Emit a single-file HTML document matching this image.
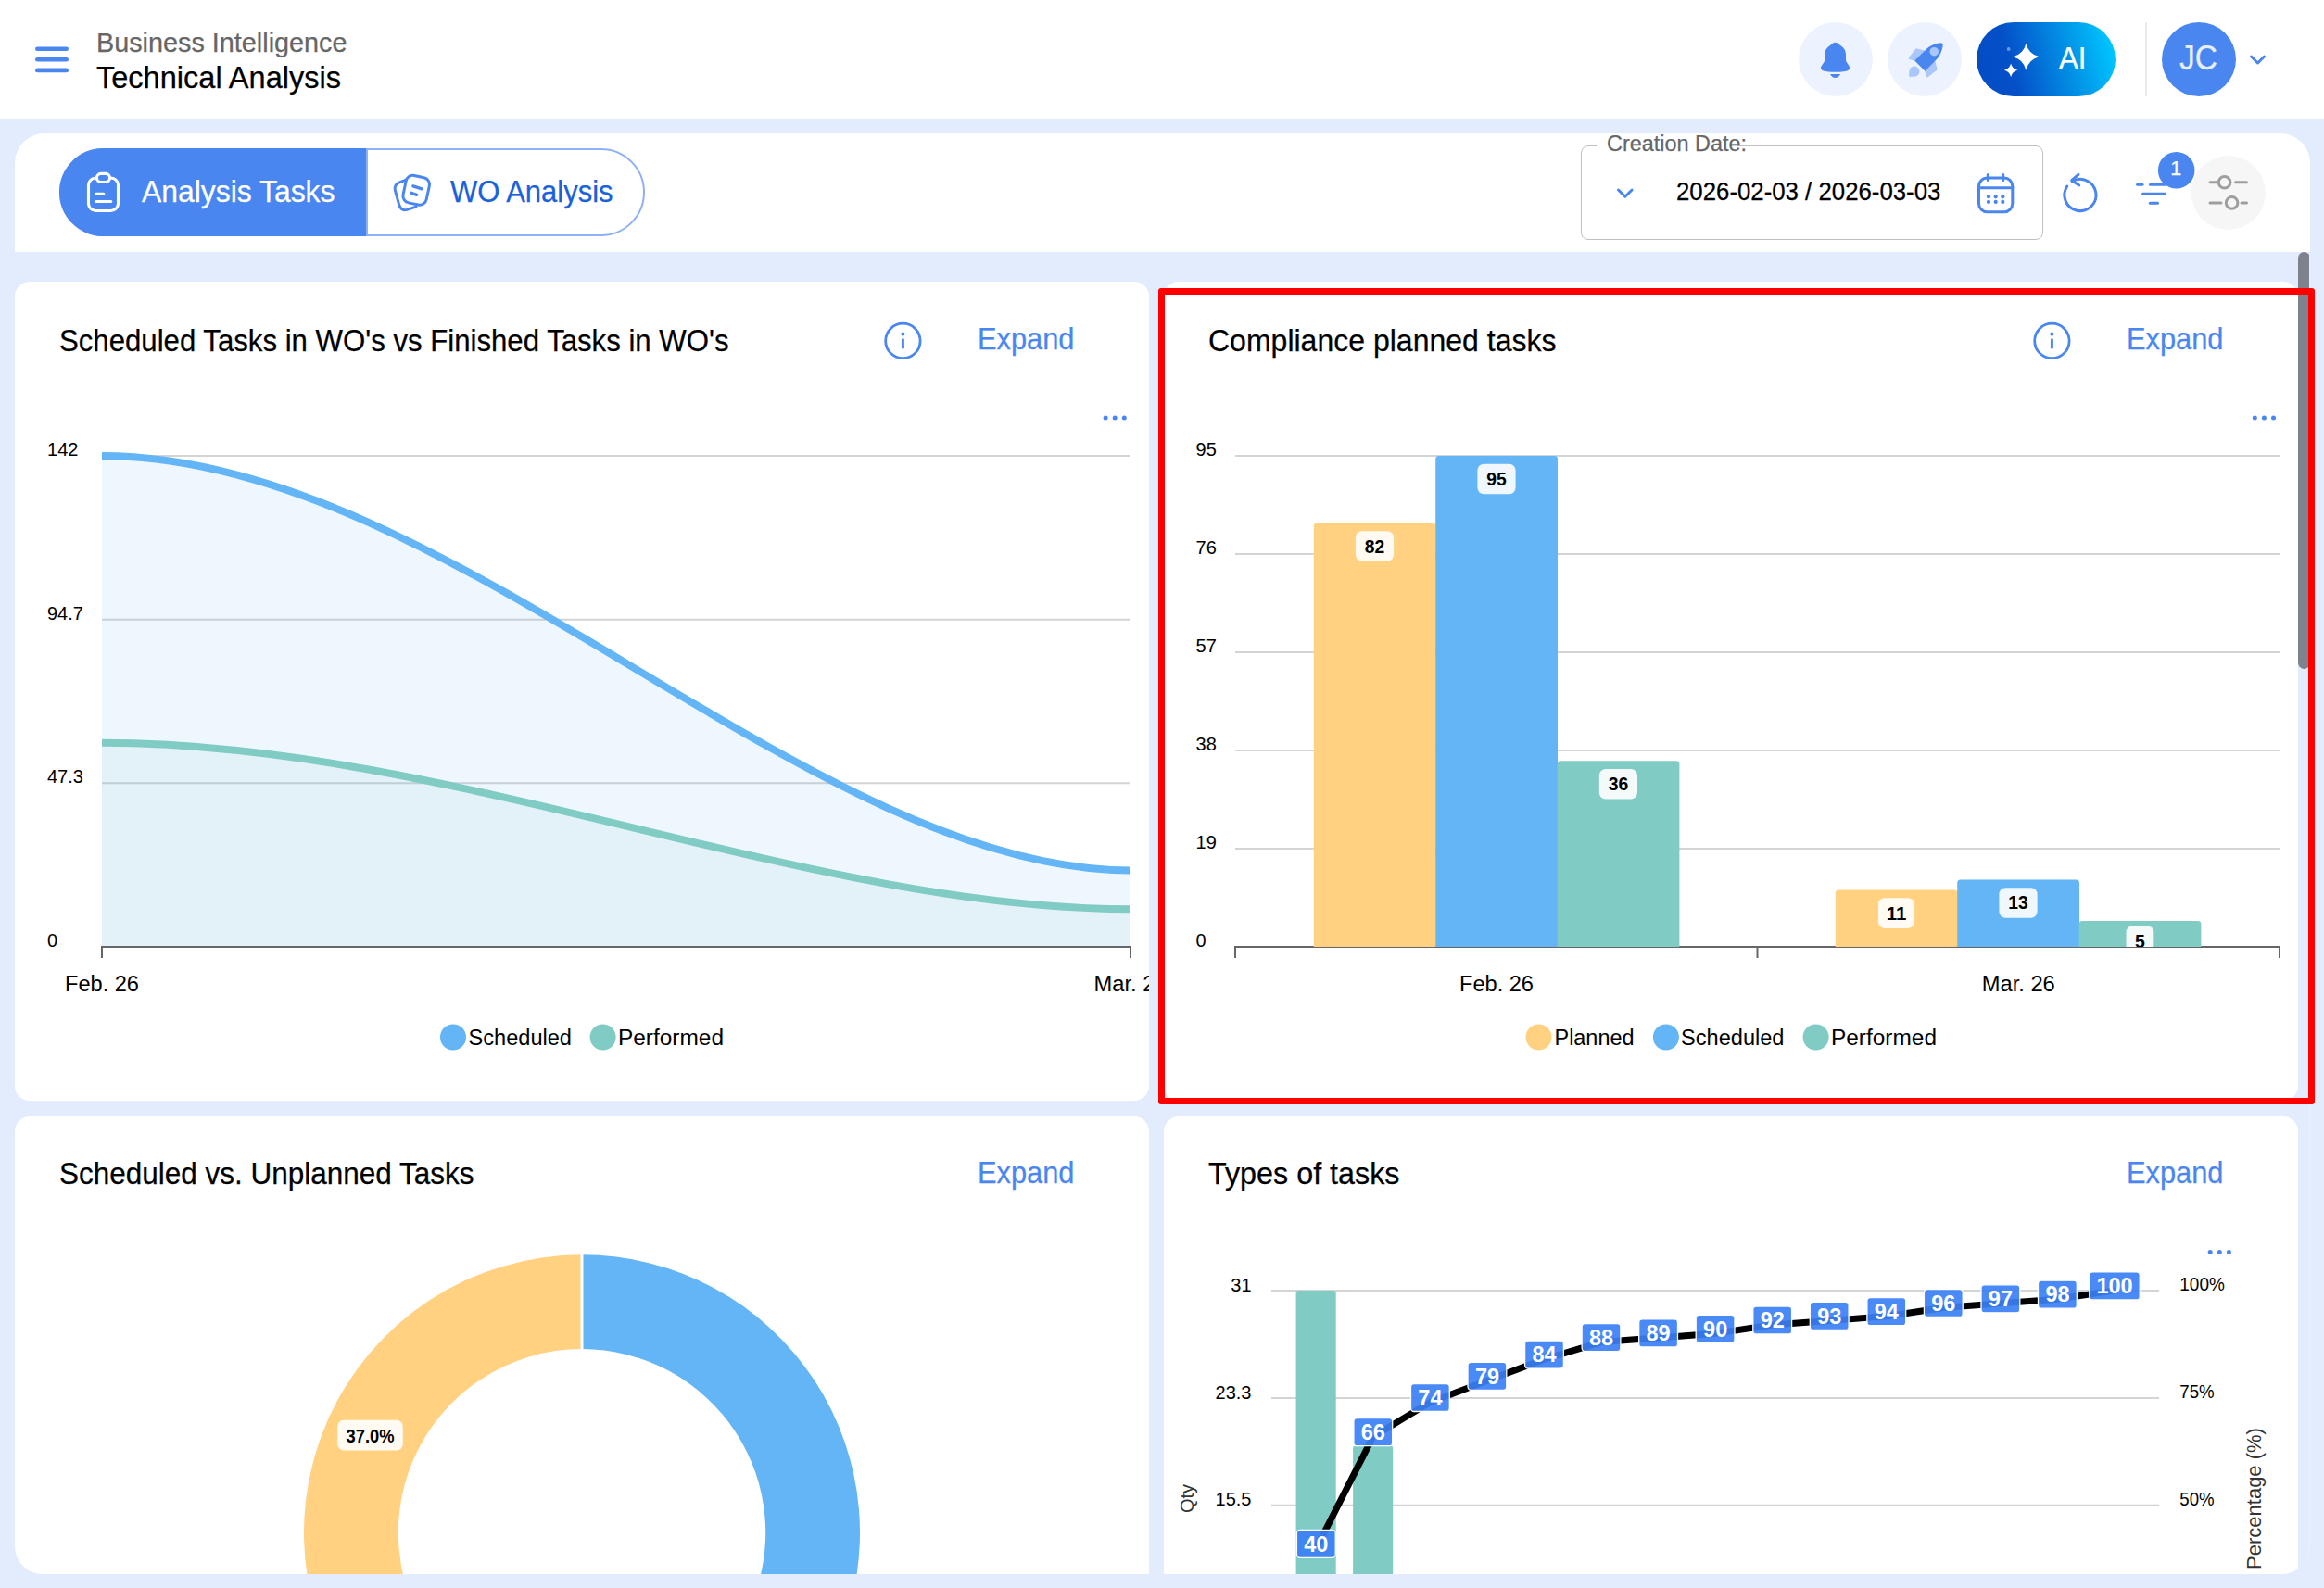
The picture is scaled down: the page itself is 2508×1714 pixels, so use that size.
<!DOCTYPE html>
<html lang="en"><head><meta charset="utf-8"><title>Technical Analysis</title>
<style>
html,body{margin:0;padding:0;}
body{width:2508px;height:1714px;overflow:hidden;background:#e3ecfd;font-family:"Liberation Sans",Arial,sans-serif;position:relative;}
.t{position:absolute;line-height:1;white-space:pre;transform-origin:0 0;-webkit-text-stroke:0.250px currentColor;}
.abs{position:absolute;}
svg{position:absolute;left:0;top:0;overflow:visible;}
svg text{font-family:"Liberation Sans",Arial,sans-serif;}
.card{position:absolute;background:#fff;border-radius:16px;}
</style></head><body>

<div class="abs" style="left:0;top:0;width:2508px;height:127.5px;background:#fff;"></div>
<svg width="2508" height="128" viewBox="0 0 2508 128"><g stroke="#4a86f0" stroke-width="4.6" stroke-linecap="round"><line x1="40.3" y1="52.8" x2="71.7" y2="52.8"/><line x1="40.3" y1="64.3" x2="71.7" y2="64.3"/><line x1="40.3" y1="75.9" x2="71.7" y2="75.9"/></g></svg>
<span class="t" style="left:104.00px;top:32.25px;font-size:29px;color:#666;transform:scaleX(0.9929);">Business Intelligence</span>
<span class="t" style="left:104.00px;top:66.67px;font-size:33px;color:#000;transform:scaleX(0.9858);">Technical Analysis</span>
<div class="abs" style="left:1940.7px;top:24px;width:80px;height:80px;border-radius:50%;background:#ecf2fe;"></div>
<div class="abs" style="left:2036.8px;top:24px;width:80px;height:80px;border-radius:50%;background:#ecf2fe;"></div>
<div class="abs" style="left:2133px;top:24px;width:150px;height:80px;border-radius:40px;background:linear-gradient(75deg,#034bc4 0%,#0450c8 27%,#00c8ff 96%);"></div>
<div class="abs" style="left:2315px;top:24px;width:2px;height:80px;background:#e9e9e9;"></div>
<div class="abs" style="left:2333px;top:24px;width:80px;height:80px;border-radius:50%;background:#4a86f0;"></div>
<span class="t" style="left:2352.30px;top:44.08px;font-size:37px;color:#e8f0fe;transform:scaleX(0.9067);">JC</span>
<span class="t" style="left:2221.50px;top:46.07px;font-size:33px;color:#fff;transform:scaleX(0.9461);">AI</span>
<svg width="2508" height="128" viewBox="0 0 2508 128">
<!-- bell -->
<path d="M1980.6 45.8C1982.6 45.8 1983.8 46.9 1985.2 48.2C1988.8 50.6 1992 53.2 1992 59.500V64.500C1992 67.500 1996.200 70.500 1996.200 73.600C1996.200 76.400 1992.500 77.800 1980.6 77.800C1968.700 77.800 1965 76.400 1965 73.600C1965 70.500 1969.200 67.500 1969.200 64.500V59.500C1969.200 53.200 1972.400 50.600 1976 48.200C1977.400 46.900 1978.600 45.800 1980.6 45.800Z" fill="#4a86f0"/>
<path d="M1975.100 80.100H1986.100C1984.800 82.800 1983 84 1980.600 84C1978.200 84 1976.400 82.800 1975.100 80.100Z" fill="#4a86f0"/>
<!-- rocket -->
<g transform="translate(2071.860 71.100) rotate(45)">
<g fill="#a9c7f8" stroke="#a9c7f8" stroke-width="2.400" stroke-linejoin="round">
<path d="M-7.500 -14.200L-15 -9.800L-13.600 1.800L-7.500 -1.200Z"/>
<path d="M7.500 -14.200L15 -9.800L13.600 1.800L7.500 -1.200Z"/>
</g>
<path d="M0 2.900C3.300 2.900 5.500 5.400 5.500 8.400C5.500 11.400 2.600 13.600 0.600 16C0.200 16.500 -0.200 16.500 -0.600 16C-2.600 13.600 -5.500 11.400 -5.500 8.400C-5.500 5.400 -3.300 2.900 0 2.900Z" fill="#a9c7f8"/>
<path d="M-7.900 0V-16C-7.900 -24 -4.500 -30 -1.600 -33.500Q0 -35.200 1.600 -33.500C4.500 -30 7.900 -24 7.900 -16V0Z" fill="#4a86f0"/>
<circle cx="0" cy="-21.800" r="4.800" fill="#a9c7f8"/>
</g>
<!-- sparkle -->
<path d="M2186.450 46.900Q2189.250 58.500 2200.850 61.300Q2189.250 64.100 2186.450 75.700Q2183.650 64.100 2172.050 61.300Q2183.650 58.500 2186.450 46.900Z" fill="#fff"/>
<path d="M2170.100 68.500Q2171.500 74.400 2177.400 75.800Q2171.500 77.200 2170.100 83.100Q2168.700 77.200 2162.800 75.800Q2168.700 74.400 2170.100 68.500Z" fill="#fff"/>
<circle cx="2167.700" cy="52.900" r="1.900" fill="#7fb0ee" fill-opacity="0.8"/>
<!-- chevron -->
<path d="M2429.500 61l7 7 7-7" fill="none" stroke="#4a86f0" stroke-width="3" stroke-linecap="round" stroke-linejoin="round"/>
</svg>
<div class="abs" style="left:16px;top:144px;width:2476.500px;height:127.500px;background:#fff;border-radius:32px 32px 0 0;"></div>
<div class="abs" style="left:64px;top:160.200px;width:631.500px;height:95.300px;border-radius:48px;background:#fff;box-sizing:border-box;border:2px solid #8db1f5;"></div>
<div class="abs" style="left:64px;top:160.200px;width:331.500px;height:95.300px;border-radius:48px 0 0 48px;background:#4a86f0;"></div>
<div class="abs" style="left:394.800px;top:160.200px;width:2px;height:95.300px;background:#8db1f5;"></div>
<span class="t" style="left:152.50px;top:190.27px;font-size:33px;color:#fff;transform:scaleX(0.9661);">Analysis Tasks</span>
<span class="t" style="left:486.30px;top:190.27px;font-size:33px;color:#1a62d9;transform:scaleX(0.9383);">WO Analysis</span>
<svg width="2508" height="300" viewBox="0 0 2508 300" fill="none" stroke-linecap="round" stroke-linejoin="round">
<!-- clipboard -->
<g stroke="#fff" stroke-width="3.100">
<rect x="95.500" y="192" width="32" height="35.500" rx="7.800"/>
<rect x="104.400" y="187.400" width="14.200" height="9.100" rx="4.550" fill="#4a86f0"/>
<line x1="103.600" y1="209.400" x2="111.800" y2="209.400"/><line x1="103.600" y1="217.500" x2="119.700" y2="217.500"/>
</g>
<!-- WO icon -->
<g stroke="#4a86f0" stroke-width="3">
<path d="M438.400 194.100L432.200 196.300C427.600 198 425.300 200.800 426.300 205.200L430.500 220.300C431.800 225.200 434.600 227.600 439.200 226.400L449 223.100"/>
<rect x="-12.850" y="-15" width="25.700" height="30" rx="7.500" transform="translate(449.200 205.300) rotate(12)" fill="#fff"/>
<g stroke-width="3.300"><line x1="445.800" y1="200.900" x2="455.200" y2="203.800"/><line x1="443.900" y1="208.300" x2="449.600" y2="210.400"/></g>
</g>
</svg>
<div class="abs" style="left:1706px;top:157px;width:498.500px;height:101.500px;box-sizing:border-box;border:1.600px solid #c0c0c0;border-radius:8px;"></div>
<div class="abs" style="left:1723px;top:154px;width:152px;height:8px;background:#fff;"></div>
<span class="t" style="left:1734.00px;top:143.31px;font-size:24.8px;color:#666;transform:scaleX(0.9443);">Creation Date:</span>
<span class="t" style="left:1809.00px;top:193.53px;font-size:26.9px;color:#000;transform:scaleX(0.9593);">2026-02-03 / 2026-03-03</span>
<svg width="2508" height="300" viewBox="0 0 2508 300" fill="none" stroke-linecap="round" stroke-linejoin="round">
<path d="M1746.500 205l7.300 7.300 7.300-7.300" stroke="#4a86f0" stroke-width="3"/>
<!-- calendar -->
<g stroke="#4a86f0" stroke-width="3">
<rect x="2135.500" y="192" width="36.300" height="36.800" rx="9"/>
<line x1="2135.500" y1="202.700" x2="2171.800" y2="202.700"/>
<line x1="2145.300" y1="188.500" x2="2145.300" y2="194.500"/><line x1="2161.700" y1="188.500" x2="2161.700" y2="194.500"/>
</g>
<g fill="#4a86f0"><circle cx="2146" cy="212.300" r="2.100"/><circle cx="2153.700" cy="212.300" r="2.100"/><circle cx="2161.300" cy="212.300" r="2.100"/>
<circle cx="2146" cy="217.900" r="2.100"/><circle cx="2153.700" cy="217.900" r="2.100"/><circle cx="2161.300" cy="217.900" r="2.100"/></g>
<!-- refresh -->
<g stroke="#4a86f0" stroke-width="3">
<path d="M2236.240 195.860A17.050 17.050 0 1 1 2230.820 200.990"/>
<path d="M2243 188.300L2235.700 194.700L2243.700 199.900"/>
</g>
<!-- filter -->
<g stroke="#4a86f0" stroke-width="3">
<line x1="2306.500" y1="199.300" x2="2312" y2="199.300"/><line x1="2320.500" y1="199.300" x2="2337" y2="199.300"/>
<line x1="2312.500" y1="209.300" x2="2336.500" y2="209.300"/><line x1="2320.300" y1="219.200" x2="2328.500" y2="219.200"/>
</g>
<circle cx="2348.700" cy="183.800" r="19.800" fill="#4a86f0"/>
<circle cx="2404.800" cy="208.100" r="40" fill="#f6f6f6"/>
<g stroke="#9e9e9e" stroke-width="3">
<line x1="2385" y1="196.800" x2="2393" y2="196.800"/><circle cx="2400.600" cy="196.800" r="6.300"/><line x1="2412.500" y1="196.800" x2="2424.500" y2="196.800"/>
<line x1="2385" y1="218.900" x2="2397" y2="218.900"/><circle cx="2408.600" cy="218.900" r="6.300"/><line x1="2419" y1="218.900" x2="2424.500" y2="218.900"/>
</g>
</svg>
<span class="t" style="left:2342.32px;top:171.60px;font-size:21.5px;color:#fff;">1</span>
<div class="abs" style="left:16px;top:272px;width:2477px;height:1427px;overflow:hidden;border-radius:0 0 30px 30px;box-sizing:border-box;border-right:1px solid rgba(255,255,255,0.220);">
<div class="card" style="left:0px;top:32px;width:1224px;height:884px;"></div>
<div class="card" style="left:1240px;top:32px;width:1224px;height:884px;"></div>
<div class="card" style="left:0px;top:932.7px;width:1224px;height:884px;"></div>
<div class="card" style="left:1240px;top:932.7px;width:1224px;height:884px;"></div>
<svg width="2477" height="1427" viewBox="16 272 2477 1427" style="overflow:hidden">
<line x1="110" y1="492" x2="1220" y2="492" stroke="#d4d4d4" stroke-width="2"/>
<line x1="110" y1="668.7" x2="1220" y2="668.7" stroke="#d4d4d4" stroke-width="2"/>
<line x1="110" y1="845.3" x2="1220" y2="845.3" stroke="#d4d4d4" stroke-width="2"/>
<clipPath id="c1"><rect x="110" y="480" width="1110" height="542"/></clipPath><g clip-path="url(#c1)">
<path d="M110 492C487.4 492 870.4 939.4 1220 939.4L1220 1022L110 1022Z" fill="#64b5f6" fill-opacity="0.1"/>
<path d="M110 801.7C487.4 801.7 870.4 981.2 1220 981.2L1220 1022L110 1022Z" fill="#80cbc4" fill-opacity="0.1"/>
<path d="M110 492C487.4 492 870.4 939.4 1220 939.4" fill="none" stroke="#64b5f6" stroke-width="8"/>
<path d="M110 801.7C487.4 801.7 870.4 981.2 1220 981.2" fill="none" stroke="#80cbc4" stroke-width="8"/>
</g>
<path d="M110 1034V1022H1220V1034" fill="none" stroke="#666666" stroke-width="2"/>
<text x="51.00" y="492.00" font-size="20.8" fill="#000" textLength="33.4" lengthAdjust="spacingAndGlyphs">142</text>
<text x="51.00" y="668.70" font-size="20.8" fill="#000" textLength="38.9" lengthAdjust="spacingAndGlyphs">94.7</text>
<text x="51.00" y="845.20" font-size="20.8" fill="#000" textLength="38.9" lengthAdjust="spacingAndGlyphs">47.3</text>
<text x="51.00" y="1022.00" font-size="20.8" fill="#000" textLength="11.1" lengthAdjust="spacingAndGlyphs">0</text>
<clipPath id="cc1"><rect x="16" y="304" width="1224" height="884"/></clipPath><g clip-path="url(#cc1)">
<text x="110.00" y="1069.80" font-size="24.2" fill="#000" textLength="80.0" lengthAdjust="spacingAndGlyphs" text-anchor="middle">Feb. 26</text>
<text x="1220.00" y="1069.80" font-size="24.2" fill="#000" textLength="79.0" lengthAdjust="spacingAndGlyphs" text-anchor="middle">Mar. 26</text>
</g>
<circle cx="489" cy="1119.500" r="14" fill="#64b5f6"/>
<text x="505.50" y="1128.00" font-size="24.8" fill="#000" textLength="111.5" lengthAdjust="spacingAndGlyphs">Scheduled</text>
<circle cx="650.600" cy="1119.500" r="14" fill="#80cbc4"/>
<text x="667.00" y="1128.00" font-size="24.8" fill="#000" textLength="114.0" lengthAdjust="spacingAndGlyphs">Performed</text>
<circle cx="1193.1000000000001" cy="451" r="2.500" fill="#4a86f0"/><circle cx="1203.2" cy="451" r="2.500" fill="#4a86f0"/><circle cx="1213.3" cy="451" r="2.500" fill="#4a86f0"/>
<line x1="1333" y1="492" x2="2460" y2="492" stroke="#d4d4d4" stroke-width="2"/>
<line x1="1333" y1="598" x2="2460" y2="598" stroke="#d4d4d4" stroke-width="2"/>
<line x1="1333" y1="704" x2="2460" y2="704" stroke="#d4d4d4" stroke-width="2"/>
<line x1="1333" y1="810" x2="2460" y2="810" stroke="#d4d4d4" stroke-width="2"/>
<line x1="1333" y1="916" x2="2460" y2="916" stroke="#d4d4d4" stroke-width="2"/>
<path d="M1333 1034V1022H2460V1034M1896.500 1022V1034" fill="none" stroke="#666666" stroke-width="2"/>
<clipPath id="c2"><rect x="1333" y="480" width="1127" height="542"/></clipPath><g clip-path="url(#c2)">
<path d="M1417.8 1022V568.0Q1417.8 564.5 1421.3 564.5H1546.0Q1549.5 564.5 1549.5 568.0V1022Z" fill="#ffd180"/>
<rect x="1462.9" y="573.2" width="41.2" height="32.6" rx="7" fill="#fff" fill-opacity="0.9"/><text x="1483.52" y="596.53" font-size="20" fill="#000" textLength="21.5" lengthAdjust="spacingAndGlyphs" text-anchor="middle" font-weight="700">82</text>
<path d="M1549.2 1022V495.5Q1549.2 492.0 1552.8 492.0H1677.5Q1681.0 492.0 1681.0 495.5V1022Z" fill="#64b5f6"/>
<rect x="1594.4" y="500.7" width="41.2" height="32.6" rx="7" fill="#fff" fill-opacity="0.9"/><text x="1614.97" y="524.00" font-size="20" fill="#000" textLength="21.5" lengthAdjust="spacingAndGlyphs" text-anchor="middle" font-weight="700">95</text>
<path d="M1680.7 1022V824.7Q1680.7 821.2 1684.2 821.2H1808.9Q1812.4 821.2 1812.4 824.7V1022Z" fill="#80cbc4"/>
<rect x="1725.8" y="829.9" width="41.2" height="32.6" rx="7" fill="#fff" fill-opacity="0.9"/><text x="1746.42" y="853.16" font-size="20" fill="#000" textLength="21.5" lengthAdjust="spacingAndGlyphs" text-anchor="middle" font-weight="700">36</text>
<path d="M1980.8 1022V964.1Q1980.8 960.6 1984.3 960.6H2109.1Q2112.6 960.6 2112.6 964.1V1022Z" fill="#ffd180"/>
<rect x="2026.9" y="969.3" width="39.2" height="32.6" rx="7" fill="#fff" fill-opacity="0.9"/><text x="2046.52" y="992.63" font-size="20" fill="#000" textLength="21.5" lengthAdjust="spacingAndGlyphs" text-anchor="middle" font-weight="700">11</text>
<path d="M2112.2 1022V953.0Q2112.2 949.5 2115.8 949.5H2240.5Q2244.0 949.5 2244.0 953.0V1022Z" fill="#64b5f6"/>
<rect x="2157.4" y="958.2" width="41.2" height="32.6" rx="7" fill="#fff" fill-opacity="0.9"/><text x="2177.97" y="981.47" font-size="20" fill="#000" textLength="21.5" lengthAdjust="spacingAndGlyphs" text-anchor="middle" font-weight="700">13</text>
<path d="M2243.7 1022V997.6Q2243.7 994.1 2247.2 994.1H2371.9Q2375.4 994.1 2375.4 997.6V1022Z" fill="#80cbc4"/>
<rect x="2294.5" y="999.3" width="29.8" height="32.6" rx="7" fill="#fff" fill-opacity="0.9"/><text x="2309.42" y="1022.61" font-size="20" fill="#000" textLength="10.8" lengthAdjust="spacingAndGlyphs" text-anchor="middle" font-weight="700">5</text>
</g>
<text x="1290.60" y="492.30" font-size="20.8" fill="#000" textLength="22.2" lengthAdjust="spacingAndGlyphs">95</text>
<text x="1290.60" y="598.30" font-size="20.8" fill="#000" textLength="22.2" lengthAdjust="spacingAndGlyphs">76</text>
<text x="1290.60" y="704.30" font-size="20.8" fill="#000" textLength="22.2" lengthAdjust="spacingAndGlyphs">57</text>
<text x="1290.60" y="810.30" font-size="20.8" fill="#000" textLength="22.2" lengthAdjust="spacingAndGlyphs">38</text>
<text x="1290.60" y="916.30" font-size="20.8" fill="#000" textLength="22.2" lengthAdjust="spacingAndGlyphs">19</text>
<text x="1290.60" y="1022.30" font-size="20.8" fill="#000" textLength="11.1" lengthAdjust="spacingAndGlyphs">0</text>
<text x="1615.00" y="1069.80" font-size="24.2" fill="#000" textLength="80.0" lengthAdjust="spacingAndGlyphs" text-anchor="middle">Feb. 26</text>
<text x="2178.30" y="1069.80" font-size="24.2" fill="#000" textLength="79.0" lengthAdjust="spacingAndGlyphs" text-anchor="middle">Mar. 26</text>
<circle cx="1660.500" cy="1119.500" r="14" fill="#ffd180"/>
<text x="1677.50" y="1128.00" font-size="24.8" fill="#000" textLength="86.0" lengthAdjust="spacingAndGlyphs">Planned</text>
<circle cx="1797.900" cy="1119.500" r="14" fill="#64b5f6"/>
<text x="1814.00" y="1128.00" font-size="24.8" fill="#000" textLength="111.5" lengthAdjust="spacingAndGlyphs">Scheduled</text>
<circle cx="1959.600" cy="1119.500" r="14" fill="#80cbc4"/>
<text x="1976.00" y="1128.00" font-size="24.8" fill="#000" textLength="114.0" lengthAdjust="spacingAndGlyphs">Performed</text>
<circle cx="2433.3" cy="451" r="2.500" fill="#4a86f0"/><circle cx="2443.4" cy="451" r="2.500" fill="#4a86f0"/><circle cx="2453.5" cy="451" r="2.500" fill="#4a86f0"/>
<path d="M628.00 1354.30A300 300 0 1 1 409.31 1859.66L483.52 1789.98A198.2 198.2 0 1 0 628.00 1456.10Z" fill="#64b5f6"/>
<path d="M409.31 1859.66A300 300 0 0 1 628.00 1354.30L628.00 1456.10A198.2 198.2 0 0 0 483.52 1789.98Z" fill="#ffd180"/>
<line x1="628" y1="1353.3" x2="628" y2="1457.1" stroke="#fff" stroke-width="3"/>
<rect x="364.200" y="1532.700" width="70.600" height="32.800" rx="7" fill="#fff" fill-opacity="0.9"/>
<text x="399.50" y="1556.60" font-size="20" fill="#000" textLength="52.0" lengthAdjust="spacingAndGlyphs" text-anchor="middle" font-weight="700">37.0%</text>
<line x1="1372" y1="1392.9" x2="2330" y2="1392.9" stroke="#d4d4d4" stroke-width="2"/>
<line x1="1372" y1="1509" x2="2330" y2="1509" stroke="#d4d4d4" stroke-width="2"/>
<line x1="1372" y1="1624.7" x2="2330" y2="1624.7" stroke="#d4d4d4" stroke-width="2"/>
<path d="M1398.6 1720V1395.9Q1398.6 1392.9 1401.6 1392.9H1438.7Q1441.7 1392.9 1441.7 1395.9V1720Z" fill="#80cbc4"/>
<path d="M1460.1 1720V1563.2Q1460.1 1560.2 1463.1 1560.2H1500.2Q1503.2 1560.2 1503.2 1563.2V1720Z" fill="#80cbc4"/>
<polyline points="1420.3,1671.3 1481.8,1550.7 1543.4,1513.5 1604.9,1490.3 1666.5,1467.1 1728.0,1448.6 1789.6,1443.9 1851.1,1439.3 1912.7,1430.0 1974.2,1425.4 2035.8,1420.7 2097.3,1411.5 2158.9,1406.8 2220.4,1402.2 2282.0,1392.9" fill="none" stroke="#000" stroke-width="7" stroke-linejoin="round"/>
<rect x="1399.4" y="1651.3" width="41.8" height="30" rx="3.500" fill="#3a80f6" fill-opacity="0.92" stroke="#fff" stroke-width="1.300"/>
<text x="1420.30" y="1674.60" font-size="23.5" fill="#fff" text-anchor="middle" font-weight="700">40</text>
<rect x="1460.9" y="1530.7" width="41.8" height="30" rx="3.500" fill="#3a80f6" fill-opacity="0.92" stroke="#fff" stroke-width="1.300"/>
<text x="1481.85" y="1553.96" font-size="23.5" fill="#fff" text-anchor="middle" font-weight="700">66</text>
<rect x="1522.5" y="1493.5" width="41.8" height="30" rx="3.500" fill="#3a80f6" fill-opacity="0.92" stroke="#fff" stroke-width="1.300"/>
<text x="1543.40" y="1516.84" font-size="23.5" fill="#fff" text-anchor="middle" font-weight="700">74</text>
<rect x="1584.0" y="1470.3" width="41.8" height="30" rx="3.500" fill="#3a80f6" fill-opacity="0.92" stroke="#fff" stroke-width="1.300"/>
<text x="1604.95" y="1493.64" font-size="23.5" fill="#fff" text-anchor="middle" font-weight="700">79</text>
<rect x="1645.6" y="1447.1" width="41.8" height="30" rx="3.500" fill="#3a80f6" fill-opacity="0.92" stroke="#fff" stroke-width="1.300"/>
<text x="1666.50" y="1470.44" font-size="23.5" fill="#fff" text-anchor="middle" font-weight="700">84</text>
<rect x="1707.1" y="1428.6" width="41.8" height="30" rx="3.500" fill="#3a80f6" fill-opacity="0.92" stroke="#fff" stroke-width="1.300"/>
<text x="1728.05" y="1451.88" font-size="23.5" fill="#fff" text-anchor="middle" font-weight="700">88</text>
<rect x="1768.7" y="1423.9" width="41.8" height="30" rx="3.500" fill="#3a80f6" fill-opacity="0.92" stroke="#fff" stroke-width="1.300"/>
<text x="1789.60" y="1447.24" font-size="23.5" fill="#fff" text-anchor="middle" font-weight="700">89</text>
<rect x="1830.2" y="1419.3" width="41.8" height="30" rx="3.500" fill="#3a80f6" fill-opacity="0.92" stroke="#fff" stroke-width="1.300"/>
<text x="1851.15" y="1442.60" font-size="23.5" fill="#fff" text-anchor="middle" font-weight="700">90</text>
<rect x="1891.8" y="1410.0" width="41.8" height="30" rx="3.500" fill="#3a80f6" fill-opacity="0.92" stroke="#fff" stroke-width="1.300"/>
<text x="1912.70" y="1433.32" font-size="23.5" fill="#fff" text-anchor="middle" font-weight="700">92</text>
<rect x="1953.3" y="1405.4" width="41.8" height="30" rx="3.500" fill="#3a80f6" fill-opacity="0.92" stroke="#fff" stroke-width="1.300"/>
<text x="1974.25" y="1428.68" font-size="23.5" fill="#fff" text-anchor="middle" font-weight="700">93</text>
<rect x="2014.9" y="1400.7" width="41.8" height="30" rx="3.500" fill="#3a80f6" fill-opacity="0.92" stroke="#fff" stroke-width="1.300"/>
<text x="2035.80" y="1424.04" font-size="23.5" fill="#fff" text-anchor="middle" font-weight="700">94</text>
<rect x="2076.4" y="1391.5" width="41.8" height="30" rx="3.500" fill="#3a80f6" fill-opacity="0.92" stroke="#fff" stroke-width="1.300"/>
<text x="2097.35" y="1414.76" font-size="23.5" fill="#fff" text-anchor="middle" font-weight="700">96</text>
<rect x="2138.0" y="1386.8" width="41.8" height="30" rx="3.500" fill="#3a80f6" fill-opacity="0.92" stroke="#fff" stroke-width="1.300"/>
<text x="2158.90" y="1410.12" font-size="23.5" fill="#fff" text-anchor="middle" font-weight="700">97</text>
<rect x="2199.5" y="1382.2" width="41.8" height="30" rx="3.500" fill="#3a80f6" fill-opacity="0.92" stroke="#fff" stroke-width="1.300"/>
<text x="2220.45" y="1405.48" font-size="23.5" fill="#fff" text-anchor="middle" font-weight="700">98</text>
<rect x="2254.8" y="1372.9" width="54.4" height="30" rx="3.500" fill="#3a80f6" fill-opacity="0.92" stroke="#fff" stroke-width="1.300"/>
<text x="2282.00" y="1396.20" font-size="23.5" fill="#fff" text-anchor="middle" font-weight="700">100</text>
<text x="1350.50" y="1393.50" font-size="20.8" fill="#000" textLength="22.2" lengthAdjust="spacingAndGlyphs" text-anchor="end">31</text>
<text x="1350.50" y="1509.60" font-size="20.8" fill="#000" textLength="38.9" lengthAdjust="spacingAndGlyphs" text-anchor="end">23.3</text>
<text x="1350.50" y="1625.30" font-size="20.8" fill="#000" textLength="38.9" lengthAdjust="spacingAndGlyphs" text-anchor="end">15.5</text>
<text x="2352.30" y="1393.30" font-size="20.8" fill="#000" textLength="48.6" lengthAdjust="spacingAndGlyphs">100%</text>
<text x="2352.30" y="1509.40" font-size="20.8" fill="#000" textLength="37.3" lengthAdjust="spacingAndGlyphs">75%</text>
<text x="2352.30" y="1625.10" font-size="20.8" fill="#000" textLength="37.3" lengthAdjust="spacingAndGlyphs">50%</text>
<text transform="translate(1287.900 1617.500) rotate(-90)" font-size="20" fill="#333" text-anchor="middle">Qty</text>
<text transform="translate(2440.300 1617.500) rotate(-90)" font-size="22" fill="#333" text-anchor="middle">Percentage (%)</text>
<circle cx="2385.2000000000003" cy="1351.5" r="2.500" fill="#4a86f0"/><circle cx="2395.3" cy="1351.5" r="2.500" fill="#4a86f0"/><circle cx="2405.4" cy="1351.5" r="2.500" fill="#4a86f0"/>
</svg>
<span class="t" style="left:48.00px;top:79.07px;font-size:33px;color:#000;transform:scaleX(0.9443);">Scheduled Tasks in WO&#x27;s vs Finished Tasks in WO&#x27;s</span>
<span class="t" style="left:1038.80px;top:77.47px;font-size:33px;color:#4a86f0;transform:scaleX(0.9337);">Expand</span>
<span class="t" style="left:1288.20px;top:78.87px;font-size:33px;color:#000;transform:scaleX(0.9701);">Compliance planned tasks</span>
<span class="t" style="left:2278.80px;top:77.47px;font-size:33px;color:#4a86f0;transform:scaleX(0.9337);">Expand</span>
<span class="t" style="left:48.00px;top:978.07px;font-size:33px;color:#000;transform:scaleX(0.9541);">Scheduled vs. Unplanned Tasks</span>
<span class="t" style="left:1038.80px;top:976.57px;font-size:33px;color:#4a86f0;transform:scaleX(0.9337);">Expand</span>
<span class="t" style="left:1287.80px;top:978.07px;font-size:33px;color:#000;transform:scaleX(0.9790);">Types of tasks</span>
<span class="t" style="left:2278.80px;top:976.57px;font-size:33px;color:#4a86f0;transform:scaleX(0.9337);">Expand</span>
<svg width="2477" height="1427" viewBox="16 272 2477 1427" fill="none">
<circle cx="974.4" cy="367.900" r="18.700" stroke="#4a86f0" stroke-width="2.800"/><line x1="974.4" y1="366.800" x2="974.4" y2="375.300" stroke="#4a86f0" stroke-width="2.900" stroke-linecap="round"/><circle cx="974.4" cy="360.600" r="2.100" fill="#4a86f0"/>
<circle cx="2214.4" cy="367.900" r="18.700" stroke="#4a86f0" stroke-width="2.800"/><line x1="2214.4" y1="366.800" x2="2214.4" y2="375.300" stroke="#4a86f0" stroke-width="2.900" stroke-linecap="round"/><circle cx="2214.4" cy="360.600" r="2.100" fill="#4a86f0"/>
</svg>
<div class="abs" style="left:2464px;top:0;width:13px;height:449.500px;background:#7e828c;border-radius:6.500px;"></div>
</div>
<div class="abs" style="left:1250.400px;top:310.600px;width:1247.800px;height:881.200px;box-sizing:border-box;border:7.200px solid #ff0000;border-radius:3px;"></div>
</body></html>
